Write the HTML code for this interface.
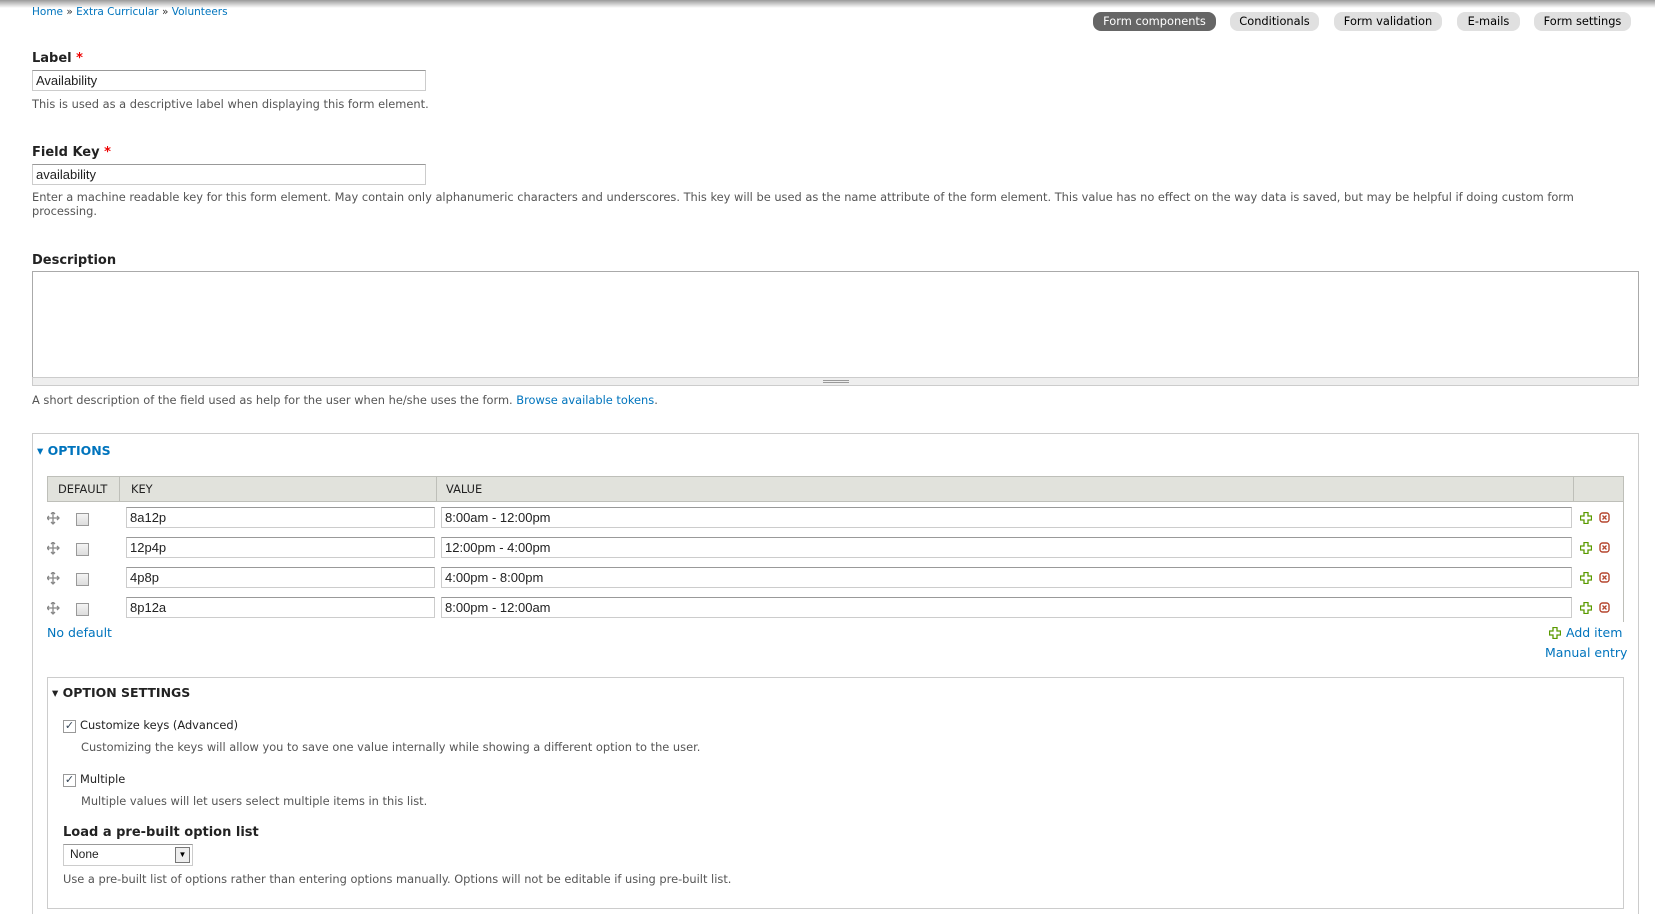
<!DOCTYPE html>
<html style="width:1655px;height:914px;overflow:hidden"><head><meta charset="utf-8"><style>
*{box-sizing:border-box;margin:0;padding:0}
body{width:1655px;height:914px;overflow:hidden;background:#fff;font-family:"DejaVu Sans",Verdana,sans-serif;font-size:11.4px;color:#333;position:relative}
.a{position:absolute;white-space:nowrap}
.shadow{position:absolute;left:0;top:0;width:1655px;height:8px;background:linear-gradient(#9a9a9a,#fff)}
a,.lnk{color:#0074bd;text-decoration:none}
.tab{position:absolute;top:12px;height:19px;border-radius:8px;background:#e0e0e0;color:#000;font-size:11.4px;text-align:center;line-height:19px}
.tab.on{background:#666;color:#fff}
.lbl{font-weight:bold;font-size:13px;color:#222}
.req{color:#e00}
.inp{position:absolute;border:1px solid #ccc;border-top-color:#999;background:#fff;font-family:"Liberation Sans",Arial,sans-serif;font-size:13px;color:#222;padding-left:3px;line-height:19px;height:21px}
.desc{color:#555}
.fs{position:absolute;border:1px solid #ccc}
.cb{position:absolute;width:13px;height:13px;border:1px solid #999;background:linear-gradient(#f4f4f4,#ddd)}
.mv{position:absolute;left:47px}
.plus{position:absolute}
.x{position:absolute}
</style></head><body>
<div class="shadow"></div>
<div class="a" style="left:32px;top:6px;font-size:10.5px"><a>Home</a> » <a>Extra Curricular</a> » <a>Volunteers</a></div>
<div class="tab on" style="left:1093px;width:123px">Form components</div>
<div class="tab" style="left:1230px;width:89px">Conditionals</div>
<div class="tab" style="left:1334px;width:108px">Form validation</div>
<div class="tab" style="left:1457px;width:63px">E-mails</div>
<div class="tab" style="left:1534px;width:97px">Form settings</div>

<div class="a lbl" style="left:32px;top:51px">Label <span class="req">*</span></div>
<div class="inp" style="left:32px;top:70px;width:394px">Availability</div>
<div class="a desc" style="left:32px;top:97px">This is used as a descriptive label when displaying this form element.</div>

<div class="a lbl" style="left:32px;top:145px">Field Key <span class="req">*</span></div>
<div class="inp" style="left:32px;top:164px;width:394px">availability</div>
<div class="a desc" style="left:32px;top:190px;white-space:normal;width:1600px;line-height:14px">Enter a machine readable key for this form element. May contain only alphanumeric characters and underscores. This key will be used as the name attribute of the form element. This value has no effect on the way data is saved, but may be helpful if doing custom form processing.</div>

<div class="a lbl" style="left:32px;top:253px">Description</div>
<div class="a" style="left:32px;top:271px;width:1607px;height:106px;border:1px solid #aaa;border-bottom:none"></div>
<div class="a" style="left:32px;top:377px;width:1607px;height:9px;background:#eee;border:1px solid #ccc"><div style="position:absolute;left:790px;top:2px;width:26px;height:3px;border-top:1px solid #999;border-bottom:1px solid #999"></div></div>
<div class="a desc" style="left:32px;top:393px">A short description of the field used as help for the user when he/she uses the form. <a>Browse available tokens</a>.</div>

<div class="fs" style="left:32px;top:433px;width:1607px;height:490px"></div>
<div class="a lnk" style="left:37px;top:443px;font-weight:bold;font-size:12.5px">▾ OPTIONS</div>

<div class="a" style="left:47px;top:476px;width:1577px;height:26px;background:#e1e2dc;border:1px solid #bebfb9"></div>
<div class="a" style="left:119px;top:476px;width:1px;height:26px;background:#bebfb9"></div>
<div class="a" style="left:436px;top:476px;width:1px;height:26px;background:#bebfb9"></div>
<div class="a" style="left:1573px;top:476px;width:1px;height:26px;background:#bebfb9"></div>
<div class="a" style="left:1623px;top:502px;width:1px;height:120px;background:#bebfb9"></div>
<div class="a" style="left:58px;top:482px;color:#222">DEFAULT</div>
<div class="a" style="left:131px;top:482px;color:#222">KEY</div>
<div class="a" style="left:446px;top:482px;color:#222">VALUE</div>

<svg width="0" height="0" style="position:absolute"><defs>
<g id="mv"><path d="M6 0v12M0 6h12M4 2l2-2 2 2M4 10l2 2 2-2M2 4l-2 2 2 2M10 4l2 2-2 2" stroke="#888" stroke-width="1.3" fill="none"/></g>
<g id="pl"><path d="M4 .5h4v3.5h3.5v4H8v3.5H4V8H.5V4H4z" stroke="#5a9a00" stroke-width="1.3" fill="#fff"/></g>
<g id="xx"><rect x="1" y="1" width="9" height="9" rx="2.5" stroke="#b5462f" stroke-width="1.4" fill="#fff"/><path d="M3.5 3.5l4 4M7.5 3.5l-4 4" stroke="#b5462f" stroke-width="1.3"/></g>
</defs></svg>

<svg class="mv" style="top:512px" width="13" height="13"><use href="#mv"/></svg><div class="cb" style="left:76px;top:513px"></div>
<div class="inp" style="left:126px;top:507px;width:309px">8a12p</div><div class="inp" style="left:441px;top:507px;width:1131px">8:00am - 12:00pm</div>
<svg class="plus" style="left:1580px;top:512px" width="12" height="12"><use href="#pl"/></svg><svg class="x" style="left:1599px;top:512px" width="11" height="11"><use href="#xx"/></svg>

<svg class="mv" style="top:542px" width="13" height="13"><use href="#mv"/></svg><div class="cb" style="left:76px;top:543px"></div>
<div class="inp" style="left:126px;top:537px;width:309px">12p4p</div><div class="inp" style="left:441px;top:537px;width:1131px">12:00pm - 4:00pm</div>
<svg class="plus" style="left:1580px;top:542px" width="12" height="12"><use href="#pl"/></svg><svg class="x" style="left:1599px;top:542px" width="11" height="11"><use href="#xx"/></svg>

<svg class="mv" style="top:572px" width="13" height="13"><use href="#mv"/></svg><div class="cb" style="left:76px;top:573px"></div>
<div class="inp" style="left:126px;top:567px;width:309px">4p8p</div><div class="inp" style="left:441px;top:567px;width:1131px">4:00pm - 8:00pm</div>
<svg class="plus" style="left:1580px;top:572px" width="12" height="12"><use href="#pl"/></svg><svg class="x" style="left:1599px;top:572px" width="11" height="11"><use href="#xx"/></svg>

<svg class="mv" style="top:602px" width="13" height="13"><use href="#mv"/></svg><div class="cb" style="left:76px;top:603px"></div>
<div class="inp" style="left:126px;top:597px;width:309px">8p12a</div><div class="inp" style="left:441px;top:597px;width:1131px">8:00pm - 12:00am</div>
<svg class="plus" style="left:1580px;top:602px" width="12" height="12"><use href="#pl"/></svg><svg class="x" style="left:1599px;top:602px" width="11" height="11"><use href="#xx"/></svg>

<div class="a lnk" style="left:47px;top:625px;font-size:12.5px">No default</div>
<svg class="plus" style="left:1549px;top:627px" width="12" height="12"><use href="#pl"/></svg>
<div class="a lnk" style="left:1566px;top:625px;font-size:12.5px">Add item</div>
<div class="a lnk" style="left:1545px;top:645px;font-size:12.5px">Manual entry</div>

<div class="fs" style="left:47px;top:677px;width:1577px;height:232px"></div>
<div class="a" style="left:52px;top:685px;font-weight:bold;font-size:12.5px;color:#222">▾ OPTION SETTINGS</div>
<div class="cb" style="left:63px;top:720px;background:#fff;font-size:11px;line-height:10px;text-align:center;color:#345">✓</div>
<div class="a" style="left:80px;top:718px;color:#222">Customize keys (Advanced)</div>
<div class="a desc" style="left:81px;top:740px">Customizing the keys will allow you to save one value internally while showing a different option to the user.</div>
<div class="cb" style="left:63px;top:774px;background:#fff;font-size:11px;line-height:10px;text-align:center;color:#345">✓</div>
<div class="a" style="left:80px;top:772px;color:#222">Multiple</div>
<div class="a desc" style="left:81px;top:794px">Multiple values will let users select multiple items in this list.</div>
<div class="a lbl" style="left:63px;top:825px">Load a pre-built option list</div>
<div class="inp" style="left:63px;top:844px;width:130px;height:22px;font-size:12px;padding-left:6px">None<div style="position:absolute;right:2px;top:2px;width:15px;height:16px;border:1px solid #777;background:#eee;font-size:8px;line-height:14px;text-align:center;color:#000">▼</div></div>
<div class="a desc" style="left:63px;top:872px">Use a pre-built list of options rather than entering options manually. Options will not be editable if using pre-built list.</div>
</body></html>
